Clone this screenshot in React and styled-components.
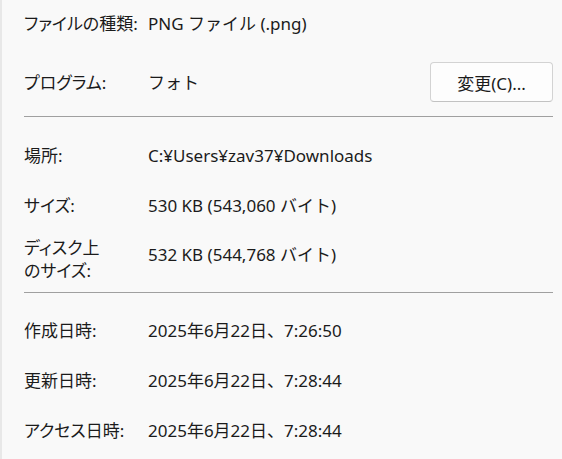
import styled, { createGlobalStyle } from "styled-components";

const GlobalStyle = createGlobalStyle`
  html, body {
    margin: 0;
    padding: 0;
    background: #f9f9f9;
  }
  body {
    font-family: "Noto Sans", "Noto Sans CJK JP", sans-serif;
    color: #1b1b1b;
  }
`;

const Panel = styled.div`
  width: 562px;
  height: 459px;
  box-sizing: border-box;
  border-left: 2px solid #e8e8e8;
  padding: 0 9px 0 22px;
  background: #f9f9f9;
  overflow: hidden;
`;

const Section = styled.div`
  display: flex;
  flex-direction: column;
  padding-top: ${(p) => p.$top || 0}px;
  padding-bottom: ${(p) => p.$bottom || 0}px;
`;

const Row = styled.div`
  display: flex;
  align-items: ${(p) => (p.$tall ? "flex-start" : "center")};
  height: ${(p) => p.$h || 50}px;
  margin-top: ${(p) => p.$mt || 0}px;
`;

const Label = styled.div`
  width: 124px;
  flex-shrink: 0;
  font-size: 17px;
  line-height: 23px;
  font-feature-settings: "palt";
  white-space: nowrap;
  padding-top: ${(p) => p.$pt || 0}px;
`;

const Value = styled.div`
  flex: 1;
  font-size: 17px;
  line-height: 23px;
  white-space: nowrap;
  padding-top: ${(p) => p.$pt || 0}px;
`;

const Button = styled.button`
  width: 123px;
  height: 40px;
  box-sizing: border-box;
  border: 1px solid #d3d3d3;
  border-bottom-color: #c2c2c2;
  border-radius: 4px;
  background: #fdfdfd;
  font-family: "Noto Sans", "Noto Sans CJK JP", sans-serif;
  font-size: 17px;
  color: #1b1b1b;
  padding: 0;
`;

const Separator = styled.hr`
  margin: 0;
  border: 0;
  height: 1px;
  background: #a0a0a0;
`;

const App = () => {
  return (
    <>
      <GlobalStyle />
      <Panel>
        <Section $bottom={14}>
          <Row $h={46}>
            <Label>ファイルの種類:</Label>
            <Value>PNG ファイル (.png)</Value>
          </Row>
          <Row $h={40} $mt={16}>
            <Label>プログラム:</Label>
            <Value>フォト</Value>
            <Button>変更(C)...</Button>
          </Row>
        </Section>
        <Separator />
        <Section $top={13} $bottom={12}>
          <Row>
            <Label>場所:</Label>
            <Value>C:¥Users¥zav37¥Downloads</Value>
          </Row>
          <Row>
            <Label>サイズ:</Label>
            <Value>530 KB (543,060 バイト)</Value>
          </Row>
          <Row $tall>
            <Label $pt={6}>
              ディスク上
              <br />
              のサイズ:
            </Label>
            <Value $pt={13}>532 KB (544,768 バイト)</Value>
          </Row>
        </Section>
        <Separator />
        <Section $top={12}>
          <Row>
            <Label>作成日時:</Label>
            <Value>2025年6月22日、7:26:50</Value>
          </Row>
          <Row>
            <Label>更新日時:</Label>
            <Value>2025年6月22日、7:28:44</Value>
          </Row>
          <Row>
            <Label>アクセス日時:</Label>
            <Value>2025年6月22日、7:28:44</Value>
          </Row>
        </Section>
      </Panel>
    </>
  );
};

export default App;
